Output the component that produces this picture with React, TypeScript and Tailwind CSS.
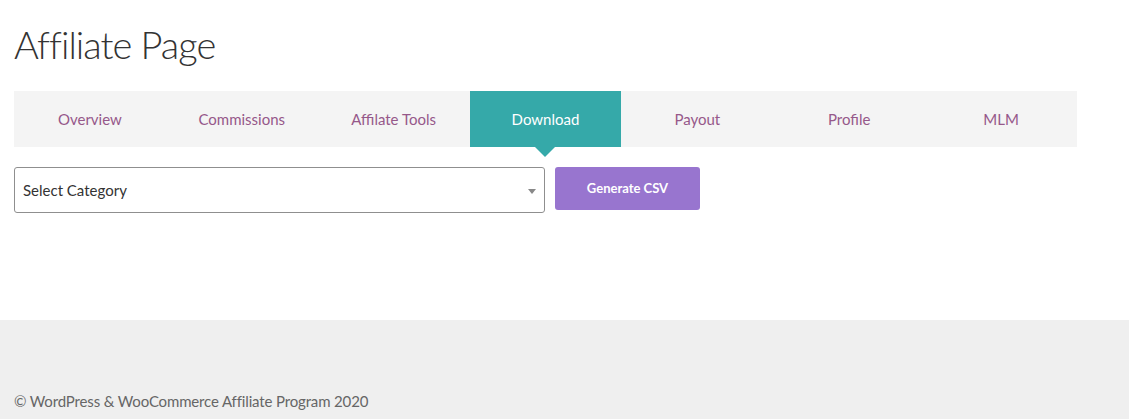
import React from "react";

const tabs = ["Overview", "Commissions", "Affilate Tools", "Download", "Payout", "Profile", "MLM"];

export default function App() {
  return (
    <div className="w-[1129px] h-[419px] flex flex-col bg-white overflow-hidden" style={{ fontFamily: "Lato, 'Open Sans', sans-serif" }}>
      <div className="flex-1 px-[14px]">
        <h1 className="text-[38px] font-light text-[#333] leading-none tracking-[-1px] pt-[25px] h-[91px]">Affiliate Page</h1>
        <div className="w-[1063px] h-[56px] bg-[#f4f4f4] grid grid-cols-7">
          {tabs.map((t) => {
            const active = t === "Download";
            return (
              <div
                key={t}
                className={
                  "relative flex items-center justify-center text-[15px] " +
                  (active ? "bg-[#35a9a9] text-white" : "text-[#96588a]")
                }
              >
                {t}
                {active && (
                  <div className="absolute left-1/2 -translate-x-1/2 top-full w-0 h-0 border-l-[10px] border-r-[10px] border-t-[10px] border-l-transparent border-r-transparent border-t-[#35a9a9]" />
                )}
              </div>
            );
          })}
        </div>
        <div className="flex gap-[10px] mt-[20px] items-start">
          <div className="w-[531px] h-[46px] border border-[#8f8f8f] rounded-[3px] flex items-center justify-between pl-[8px] pr-[8px] text-[15px] text-[#333]">
            <span className="mt-[1px]">Select Category</span>
            <span className="w-0 h-0 border-l-[4px] border-r-[4px] border-t-[5px] border-l-transparent border-r-transparent border-t-[#888] mt-[2px]" />
          </div>
          <button className="w-[145px] h-[43px] bg-[#9875cf] rounded-[3px] text-white text-[13px] font-bold">Generate CSV</button>
        </div>
      </div>
      <div className="h-[99px] bg-[#efefef] px-[14px] flex items-end pb-[7px]">
        <span className="text-[15px] tracking-[-0.15px] text-[#666]">© WordPress &amp; WooCommerce Affiliate Program 2020</span>
      </div>
    </div>
  );
}
